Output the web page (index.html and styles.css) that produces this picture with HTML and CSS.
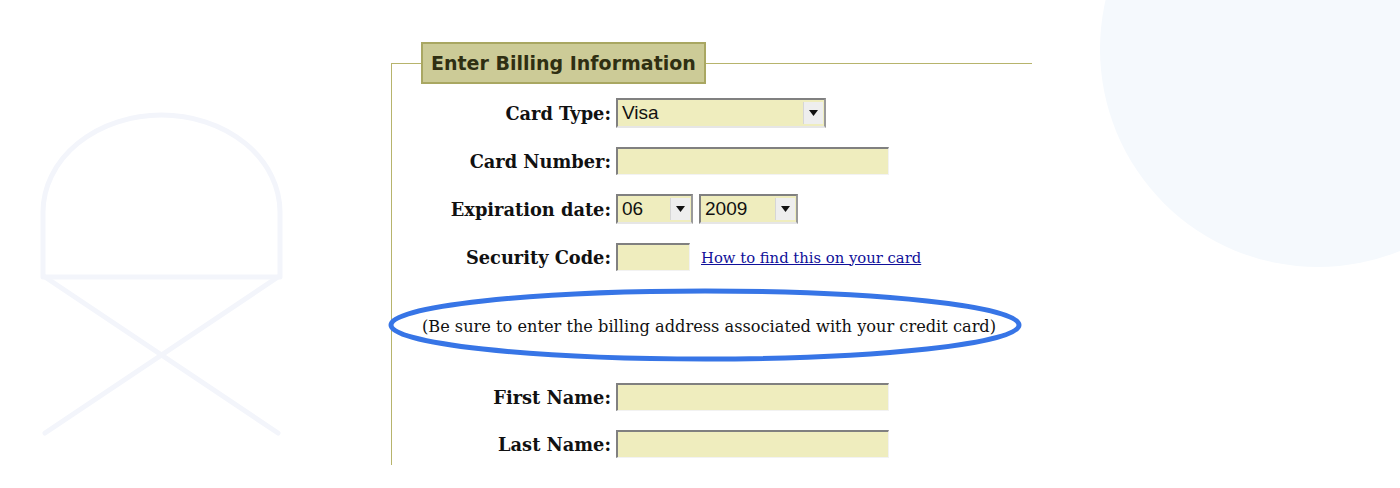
FILE: index.html
```html
<!DOCTYPE html>
<html lang="en">
<head>
    <meta charset="UTF-8">
    <meta name="viewport" content="width=device-width, initial-scale=1.0">
    <title>Billing Information</title>
    <link rel="stylesheet" href="styles.css">
</head>
<body>
    <div class="page">
        <div class="bg-circle"></div>
        <svg class="bg-icon" width="320" height="488" viewBox="0 0 320 488">
            <path d="M43 277 V212 A118.5 97 0 0 1 280 212 V277 Z" />
            <path d="M45 277 L278 433 M278 277 L45 433" />
        </svg>

        <fieldset class="billing">
            <legend>Enter Billing Information</legend>

            <div class="rows">
                <div class="row">
                    <label>Card Type:</label>
                    <div class="select select-card">
                        <span class="value">Visa</span>
                        <span class="arrow"><svg width="9" height="6" viewBox="0 0 9 6"><path d="M0 0 H9 L4.5 6 Z" /></svg></span>
                    </div>
                </div>
                <div class="row">
                    <label>Card Number:</label>
                    <input type="text" class="field field-long">
                </div>
                <div class="row">
                    <label>Expiration date:</label>
                    <div class="pair">
                        <div class="select select-month">
                            <span class="value">06</span>
                            <span class="arrow"><svg width="9" height="6" viewBox="0 0 9 6"><path d="M0 0 H9 L4.5 6 Z" /></svg></span>
                        </div>
                        <div class="select select-year">
                            <span class="value">2009</span>
                            <span class="arrow"><svg width="9" height="6" viewBox="0 0 9 6"><path d="M0 0 H9 L4.5 6 Z" /></svg></span>
                        </div>
                    </div>
                </div>
                <div class="row">
                    <label>Security Code:</label>
                    <div class="pair">
                        <input type="text" class="field field-short">
                        <a href="#" class="help-link">How to find this on your card</a>
                    </div>
                </div>
            </div>

            <div class="note">
                <svg class="circled" width="644" height="80" viewBox="0 0 644 80">
                    <ellipse cx="320" cy="38" rx="314" ry="34" />
                </svg>
                <p>(Be sure to enter the billing address associated with your credit card)</p>
            </div>

            <div class="rows rows-name">
                <div class="row">
                    <label>First Name:</label>
                    <input type="text" class="field field-long">
                </div>
                <div class="row">
                    <label>Last Name:</label>
                    <input type="text" class="field field-long">
                </div>
            </div>
        </fieldset>
    </div>
</body>
</html>
```

FILE: styles.css
```css
body {
    margin: 0;
    background-color: #fff;
    color: #111;
}

.page {
    position: relative;
    width: 1400px;
    height: 488px;
    overflow: hidden;
}

/* faint background shapes */
.bg-circle {
    position: absolute;
    left: 1100px;
    top: -169px;
    width: 436px;
    height: 436px;
    border-radius: 50%;
    background-color: #f5f9fd;
}

.bg-icon {
    position: absolute;
    left: 0;
    top: 0;
}

.bg-icon path {
    fill: none;
    stroke: #f3f5fb;
    stroke-width: 5;
    stroke-linecap: round;
    stroke-linejoin: round;
}

.billing {
    position: relative;
    width: 641px;
    box-sizing: border-box;
    margin: 42px 0 0 391px;
    padding: 0 0 6px 0;
    border: 0;
    border-top: 1px solid #b7b46c;
    border-left: 1px solid #b7b46c;
}

.billing legend {
    margin-left: 29px;
    padding: 0 8px;
    height: 38px;
    line-height: 38px;
    border: 2px solid #a9a762;
    background-color: #cccb97;
    color: #2f2f12;
    font-family: "DejaVu Sans", Verdana, sans-serif;
    font-weight: bold;
    font-size: 19px;
}

.rows {
    display: flex;
    flex-direction: column;
    gap: 18px;
    margin-top: 14px;
}

.rows-name {
    gap: 17px;
    margin-top: 17px;
}

.row {
    display: grid;
    grid-template-columns: 219px auto;
    column-gap: 5px;
    align-items: center;
    height: 30px;
}

.row label {
    text-align: right;
    font-family: "DejaVu Serif", Georgia, serif;
    font-weight: bold;
    font-size: 17.8px;
    color: #111;
}

.pair {
    display: flex;
    align-items: center;
    gap: 6px;
}

.field {
    box-sizing: border-box;
    height: 28px;
    margin: 0;
    padding: 0 4px;
    background-color: #efedbe;
    border-style: solid;
    border-width: 2px 1px 1px 2px;
    border-color: #808080 #f2f2f2 #f2f2f2 #808080;
    outline: none;
}

.field-long {
    width: 273px;
}

.field-short {
    width: 74px;
}

.select {
    box-sizing: border-box;
    display: flex;
    align-items: center;
    justify-content: space-between;
    height: 30px;
    padding: 1px 1px 1px 4px;
    background-color: #efedbe;
    border-style: solid;
    border-width: 2px;
    border-color: #808080 #9a9a9a #e6e6e6 #808080;
    font-family: "Liberation Sans", Arial, sans-serif;
    font-size: 19px;
    color: #111;
}

.select-card {
    width: 210px;
}

.select-month {
    width: 77px;
}

.select-year {
    width: 99px;
}

.select .arrow {
    display: flex;
    align-items: center;
    justify-content: center;
    width: 19px;
    height: 22px;
    background-color: #eeeeee;
    border-left: 1px solid #d6d6d6;
}

.select .arrow path {
    fill: #111;
}

.help-link {
    margin-left: 5px;
    font-family: "DejaVu Serif", Georgia, serif;
    font-size: 14.8px;
    color: #10109a;
}

.note {
    position: relative;
    height: 78px;
    margin-top: 15px;
    display: flex;
    align-items: center;
    justify-content: center;
}

.note p {
    margin: 0 0 0 -6px;
    font-family: "DejaVu Serif", Georgia, serif;
    font-size: 16.2px;
    color: #111;
}

/* hand-drawn highlight around the note */
.circled {
    position: absolute;
    left: -7px;
    top: 0;
}

.circled ellipse {
    fill: none;
    stroke: #3775e6;
    stroke-width: 5;
}
```
